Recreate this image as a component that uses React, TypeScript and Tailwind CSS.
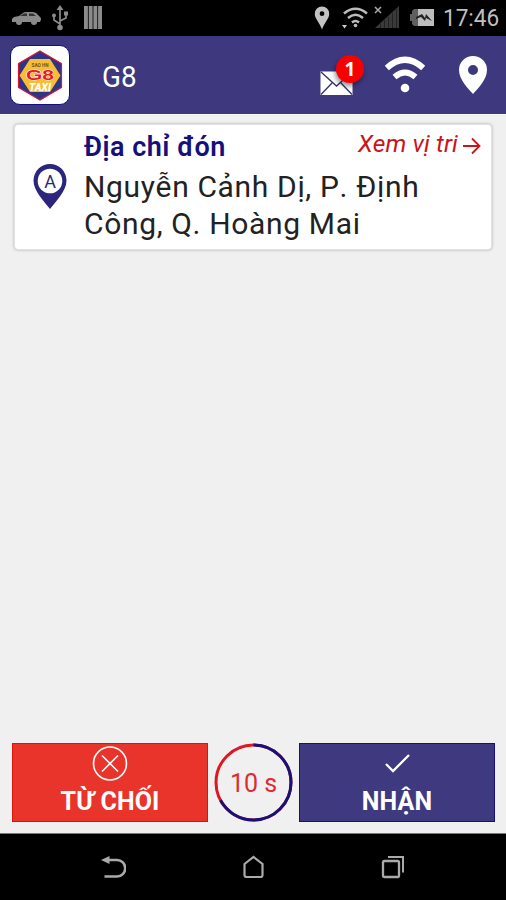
import type { ReactNode } from "react";

const PICKUP = {
  label: "Địa chỉ đón",
  lines: ["Nguyễn Cảnh Dị, P. Định", "Công, Q. Hoàng Mai"],
};

const RING_LENGTH = 2 * Math.PI * 37.5;

function StatusBar() {
  return (
    <div className="flex h-9 shrink-0 items-center justify-between bg-black pl-[11px] pr-[7px]">
      <svg width="94" height="28" viewBox="0 0 94 28" fill="#8b8b8b">
        <path d="M1 18v-3l2-2 5-1 4-3q1-1 3-1h6q2 0 4 1l4 4q2 1 0 5h-3a3 3 0 0 1-6 0h-9a3 3 0 0 1-6 0z" />
        <path d="M9 12l4-2.5h3V12zM18 9.500h4l3 2.500h-7z" fill="#333" />
        <circle cx="8" cy="18" r="2.200" />
        <circle cx="23" cy="18" r="2.200" />
        <g fill="none" stroke="#8b8b8b" strokeWidth="1.700">
          <path d="M49 5v18M49 20l-6-4v-5M49 17l6-3v-4" />
        </g>
        <path d="M49 1l3.500 5h-7z" />
        <circle cx="49" cy="23.500" r="2.800" />
        <circle cx="43" cy="11.500" r="2" />
        <path d="M53 7.500h4v4h-4z" />
        <path d="M73 2h3.900v23H73zM77.700 2h3.900v23h-3.900zM82.400 2h3.900v23h-3.900zM87.100 2H91v23h-3.900z" />
      </svg>
      <div className="flex items-center">
        <svg width="122" height="28" viewBox="0 0 122 28">
          <path
            d="M8 2.500a7.200 7.200 0 0 0-7.200 7.200C.8 15 5.500 18 8 25.500 10.500 18 15.200 15 15.200 9.700A7.200 7.200 0 0 0 8 2.500zm0 4.800a2.400 2.400 0 1 1 0 4.800 2.400 2.400 0 0 1 0-4.800z"
            fill="#c3c3c3"
            fillRule="evenodd"
          />
          <g fill="none" stroke="#bcbcbc" strokeWidth="2.500">
            <path d="M30 9.500q11.500-9.500 23 0M34 14q7.500-6.500 15 0M38 18.500q3.500-3 7 0" />
          </g>
          <circle cx="41.500" cy="21.500" r="1.800" fill="#bcbcbc" />
          <path d="M28 21h5l-2.500 3.500z" fill="#ccc" />
          <path d="M61 3l6 6m0-6l-6 6" stroke="#aaa" strokeWidth="1.500" />
          <path d="M61 24L85 2v22z" fill="#3a3a3a" />
          <path
            d="M66.500 20v4M70.500 16v8M74.500 13v11M78.500 9v15M82.500 5v19"
            stroke="#181818"
            strokeWidth=".7"
          />
          <path d="M100 5h20v17h-20l-2-2v-3h-2v-7h2V7z" fill="#5f5f5f" />
          <path d="M104 5h16v17h-16z" fill="#bdbdbd" />
          <path d="M102 13l6-3 3 4 1-4 6 7-6-3-1 3-4-4-5 2z" fill="#222" />
        </svg>
        <span className="ml-[7px] w-[56px] whitespace-nowrap text-[24px] leading-9 text-[#bfbfbf]">
          <span className="inline-block origin-left scale-x-[.94]">17:46</span>
        </span>
      </div>
    </div>
  );
}

function Logo() {
  return (
    <div className="flex h-[60px] w-[60px] items-center justify-center rounded-[10px] border border-[#13107d] bg-white">
      <svg width="48" height="54" viewBox="0 0 48 54">
        <path
          d="M24 3l21.500 12.500v24L24 52 2.500 39.500v-24z"
          fill="#2f3584"
          stroke="#dc1432"
          strokeWidth="1.200"
        />
        <path d="M14 11h20l10.500 16.500L34 44H14L3.500 27.500z" fill="#f8bd32" />
        <text
          x="24"
          y="18.500"
          fontSize="6"
          fontWeight="bold"
          fill="#665526"
          textAnchor="middle"
          textLength="17"
          lengthAdjust="spacingAndGlyphs"
        >
          SAO HN
        </text>
        <text
          x="24"
          y="32"
          fontFamily="Liberation Sans"
          fontSize="14.500"
          fontWeight="bold"
          fill="#e51a32"
          stroke="#fff"
          strokeWidth=".8"
          paintOrder="stroke"
          textAnchor="middle"
          textLength="28"
          lengthAdjust="spacingAndGlyphs"
        >
          G8
        </text>
        <text
          x="24"
          y="43"
          fontSize="10"
          fontWeight="900"
          fontStyle="italic"
          fill="#fff"
          textAnchor="middle"
          textLength="22"
          lengthAdjust="spacingAndGlyphs"
        >
          TAXI
        </text>
      </svg>
    </div>
  );
}

function Header() {
  return (
    <header className="flex h-[78px] shrink-0 items-center bg-[#3e397f] pl-[10px] pr-[18px]">
      <Logo />
      <h1 className="ml-8 pt-[4px] text-[29px] leading-none text-white">
        <span className="inline-block origin-left scale-x-[.96]">G8</span>
      </h1>
      <div className="ml-auto flex items-center">
        <div className="relative h-10 w-[46px]">
          <svg
            className="mt-[16px]"
            width="33"
            height="25"
            viewBox="0 0 33 25"
            fill="none"
          >
            <path d="M.5.5h32V24H.5z" fill="#fff" />
            <path
              d="M1 1l15.500 14L32 1M1 23.500L12 12M32 23.500L21 12"
              stroke="#35316d"
              strokeWidth="1.300"
            />
          </svg>
          <span className="absolute left-[16px] top-0 flex h-7 w-7 items-center justify-center rounded-full bg-[#f80000] font-['Open_Sans'] text-[19px] font-bold leading-none text-white shadow-[-1px_3px_5px_rgba(0,0,0,.45)]">
            1
          </span>
        </div>
        <svg
          className="ml-[18px]"
          width="42"
          height="40"
          viewBox="0 0 42 40"
          fill="none"
          stroke="#fff"
          strokeWidth="6"
        >
          <path d="M2.800 13Q21-3.500 39.200 13M10.500 22q10.500-9 21 0" />
          <circle cx="21" cy="33" r="4.300" fill="#fff" stroke="none" />
        </svg>
        <svg className="ml-[32px]" width="30" height="40" viewBox="0 0 30 40">
          <path
            d="M15 1A14 14 0 0 0 1 15c0 9.500 9 18.500 14 24 5-5.500 14-14.500 14-24A14 14 0 0 0 15 1zm0 9a5 5 0 1 1 0 10 5 5 0 0 1 0-10z"
            fill="#fff"
            fillRule="evenodd"
          />
        </svg>
      </div>
    </header>
  );
}

function PickupCard() {
  return (
    <section className="mx-[14px] mt-[9px] flex h-[126px] rounded-[4px] border border-[#e2e2e2] bg-white pl-[18px] pr-[10px] shadow-[0_0_3px_rgba(0,0,0,.28)]">
      <svg
        className="mt-[39px] shrink-0"
        width="34"
        height="46"
        viewBox="0 0 34 46"
      >
        <path
          d="M17 0A16.500 16.500 0 0 0 .5 16.500C.5 27 11 37 17 45 23 37 33.500 27 33.500 16.500A16.500 16.500 0 0 0 17 0z"
          fill="#2b267c"
        />
        <circle cx="17" cy="17" r="12.300" fill="#fff" />
        <text x="17" y="24" fontSize="18" fill="#2b267c" textAnchor="middle">
          A
        </text>
      </svg>
      <div className="ml-[17px] min-w-0 flex-1">
        <div className="flex justify-between pt-[6px]">
          <h2 className="w-[142px] whitespace-nowrap text-[27px] font-semibold leading-8 tracking-[.5px] text-[#15107b]">
            {PICKUP.label}
          </h2>
          <a
            className="flex h-[26px] items-center whitespace-nowrap text-[24.5px] italic leading-[26px] tracking-[.1px] text-[#c91419]"
            href="#map"
          >
            Xem vị tri
            <svg
              className="ml-[5px] mt-[3px]"
              width="18"
              height="18"
              viewBox="0 0 18 18"
              fill="none"
              stroke="currentColor"
              strokeWidth="1.800"
            >
              <path d="M0 9h16.500M9 1.500L16.500 9 9 16.500" />
            </svg>
          </a>
        </div>
        <p className="mt-[5px] whitespace-nowrap text-[30px] leading-[37px] tracking-[.65px] text-[#222] [font-kerning:none]">
          {PICKUP.lines.map((line) => (
            <span className="block" key={line}>
              {line}
            </span>
          ))}
        </p>
      </div>
    </section>
  );
}

function ActionButton({
  className,
  icon,
  label,
}: {
  className: string;
  icon: ReactNode;
  label: string;
}) {
  return (
    <button
      className={[
        "flex h-[79px] w-[196px] flex-col items-center border pt-[2px] text-[25px] font-bold leading-[36px] text-white",
        className,
      ].join(" ")}
      type="button"
    >
      {icon}
      <span className="pt-[2px] tracking-[.1px]">{label}</span>
    </button>
  );
}

function Countdown() {
  return (
    <div className="relative h-[79px] w-[79px]">
      <svg
        className="-rotate-90"
        width="79"
        height="79"
        viewBox="0 0 79 79"
        fill="none"
        strokeWidth="3"
      >
        <circle cx="39.500" cy="39.500" r="37.500" stroke="#de1820" />
        <circle
          cx="39.500"
          cy="39.500"
          r="37.500"
          stroke="#171178"
          strokeDasharray={`${RING_LENGTH * 0.67} ${RING_LENGTH}`}
        />
      </svg>
      <span className="absolute inset-0 flex items-center justify-center pt-[2px] text-[25px] text-[#df2b2e]">
        10 s
      </span>
    </div>
  );
}

function NavigationBar() {
  return (
    <nav className="flex h-[67px] shrink-0 items-center justify-between border-t border-[#777] bg-black pl-[101px] pr-[101px]">
      <svg width="25" height="24" viewBox="0 0 25 24" fill="none">
        <path
          d="M7 5h9a8 8 0 0 1 0 16.500H3.500"
          stroke="#aaa"
          strokeWidth="2.600"
        />
        <path d="M0 5l8.500-4v8z" fill="#aaa" />
      </svg>
      <svg
        width="22"
        height="24"
        viewBox="0 0 22 24"
        fill="none"
        stroke="#aaa"
        strokeWidth="2.200"
      >
        <path d="M1.500 9L10.500 2l9 7V20q0 2-2 2h-14q-2 0-2-2z" />
      </svg>
      <svg
        width="24"
        height="24"
        viewBox="0 0 24 24"
        fill="none"
        stroke="#aaa"
        strokeWidth="2.300"
      >
        <rect x="2" y="6" width="16" height="16" rx="1.500" />
        <path d="M7 2h15v15.500" strokeWidth="2" />
      </svg>
    </nav>
  );
}

export default function App() {
  return (
    <div className="flex h-[900px] w-[506px] flex-col overflow-hidden bg-[#f0f0f0] font-['Roboto',sans-serif]">
      <StatusBar />
      <Header />
      <main className="flex flex-1 flex-col border-t border-[#f9f9ff]">
        <PickupCard />
        <div className="mt-auto mb-[11px] flex justify-between pl-[12px] pr-[11px]">
          <ActionButton
            className="border-[#d7150b] bg-[#e9342b]"
            icon={
              <svg
                className="shrink-0"
                width="36"
                height="36"
                viewBox="0 0 36 36"
                fill="none"
                stroke="#fff"
                strokeWidth="1.600"
              >
                <circle cx="18" cy="17.500" r="16.500" />
                <path d="M10 9.500l16 16m0-16l-16 16" />
              </svg>
            }
            label="TỪ CHỐI"
          />
          <Countdown />
          <ActionButton
            className="border-[#171077] bg-[#3f397f]"
            icon={
              <svg
                className="shrink-0"
                width="36"
                height="36"
                viewBox="0 0 36 36"
                fill="none"
                stroke="#fff"
                strokeWidth="2.300"
              >
                <path d="M7 18l7 7L30 9" />
              </svg>
            }
            label="NHẬN"
          />
        </div>
      </main>
      <NavigationBar />
    </div>
  );
}
